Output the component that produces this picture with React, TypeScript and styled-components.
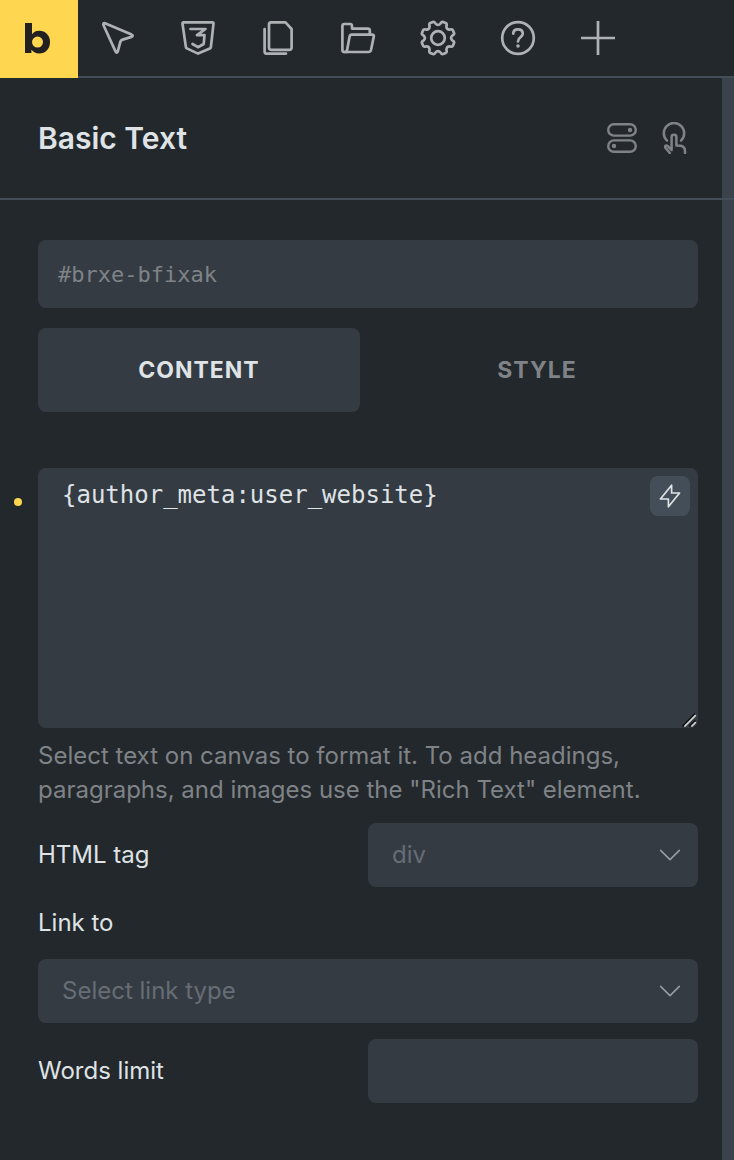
import React from "react";
import styled, { createGlobalStyle, css } from "styled-components";

const c = {
  bg: "#23282c",
  field: "#343b43",
  raised: "#434e59",
  line: "#434e58",
  text: "#dfe3e6",
  muted: "#7f8387",
  faint: "#666d75",
  icon: "#aeb2b5",
  accent: "#ffd64f",
};

const sans = `Inter, "Liberation Sans", sans-serif`;
const mono = `"DejaVu Sans Mono", "Liberation Mono", monospace`;

const GlobalStyle = createGlobalStyle`
  *, *::before, *::after { box-sizing: border-box; }
  body {
    margin: 0;
    background: ${c.bg};
    color: ${c.text};
    font-family: ${sans};
    font-size: 24px;
    line-height: 34px;
  }
  button, input, select, textarea {
    margin: 0;
    border: 0;
    font: inherit;
    letter-spacing: inherit;
    color: inherit;
  }
`;

const Builder = styled.div`
  display: flex;
  flex-direction: column;
  min-height: 100vh;
`;

const Toolbar = styled.nav`
  display: flex;
  height: 78px;
  border-bottom: 2px solid ${c.line};
`;

const Logo = styled.a`
  display: grid;
  place-items: center;
  width: 78px;
  height: 78px;
  background: ${c.accent};
  color: #212121;
`;

const ToolButton = styled.button`
  display: grid;
  place-items: center;
  width: 80px;
  height: 76px;
  padding: 0;
  background: none;
  color: ${c.icon};
  cursor: pointer;
`;

const Icon = styled.svg<{ $weight?: number }>`
  display: block;
  fill: none;
  stroke: currentColor;
  stroke-width: ${(p) => p.$weight ?? 2.7};
  stroke-linecap: round;
  stroke-linejoin: round;
`;

const Body = styled.div`
  flex: 1;
  display: flex;
`;

const Panel = styled.main`
  flex: 1;
  min-width: 0;
`;

const ResizeBar = styled.div`
  width: 12px;
  background: #3a434c;
  cursor: col-resize;
`;

/* The rule under the header runs on across the resize bar. */
const PanelHeader = styled.header`
  position: relative;
  display: flex;
  align-items: center;
  justify-content: space-between;
  height: 122px;
  margin-right: -12px;
  padding: 0 42px 0 38px;
  border-bottom: 2px solid ${c.line};
`;

const Title = styled.h1`
  margin: 0;
  font-size: 30px;
  font-weight: 600;
  line-height: 40px;
`;

const HeaderActions = styled.div`
  display: flex;
  gap: 16px;
`;

const HeaderButton = styled.button`
  display: grid;
  place-items: center;
  width: 36px;
  height: 36px;
  padding: 0;
  background: none;
  color: ${c.muted};
  cursor: pointer;
`;

const Content = styled.div`
  padding: 40px 24px 40px 38px;
`;

const fieldBase = css`
  display: block;
  width: 100%;
  border-radius: 8px;
  background: ${c.field};
  outline: none;
`;

const IdInput = styled.input`
  ${fieldBase}
  height: 68px;
  padding: 0 20px;
  && {
    font-family: ${mono};
    font-size: 22px;
    color: ${c.muted};
  }
`;

const Tabs = styled.div`
  display: grid;
  grid-template-columns: 1fr 1fr;
  gap: 16px;
  margin: 20px 0 56px;
`;

const Tab = styled.button<{ $active?: boolean }>`
  height: 84px;
  border-radius: 8px;
  background: ${(p) => (p.$active ? c.field : "transparent")};
  cursor: pointer;
  && {
    font-size: 23px;
    font-weight: 700;
    letter-spacing: 1px;
    color: ${(p) => (p.$active ? c.text : c.muted)};
  }
`;

const Controls = styled.form`
  display: flex;
  flex-direction: column;
  gap: 16px;
`;

const TextControl = styled.div`
  position: relative;
`;

const ChangedDot = styled.span`
  position: absolute;
  top: 30px;
  left: -24px;
  width: 8px;
  height: 8px;
  border-radius: 50%;
  background: ${c.accent};
`;

const TextArea = styled.textarea`
  ${fieldBase}
  height: 260px;
  padding: 10px 60px 10px 24px;
  resize: none;
  && { font-family: ${mono}; }
`;

const DynamicButton = styled.button`
  position: absolute;
  top: 8px;
  right: 8px;
  display: grid;
  place-items: center;
  width: 40px;
  height: 40px;
  padding: 0;
  border-radius: 8px;
  background: ${c.raised};
  cursor: pointer;
`;

const Grip = styled.svg`
  position: absolute;
  right: 1px;
  bottom: 1px;
  width: 16px;
  height: 14px;
  pointer-events: none;
`;

const Help = styled.p`
  margin: 11px 0 0;
  color: ${c.muted};
`;

const Row = styled.div`
  display: grid;
  grid-template-columns: 1fr 1fr;
  align-items: center;
`;

const Stack = styled.div`
  display: grid;
  gap: 16px;
`;

const Label = styled.label`
  line-height: 40px;
`;

const SelectBox = styled.div`
  position: relative;
`;

const Select = styled.select`
  ${fieldBase}
  height: 64px;
  padding: 0 56px 0 24px;
  appearance: none;
  cursor: pointer;
  && { color: ${c.faint}; }
`;

const Chevron = styled(Icon)`
  position: absolute;
  top: 26px;
  right: 17px;
  color: #9a9fa4;
  pointer-events: none;
`;

const NumberInput = styled.input`
  ${fieldBase}
  height: 64px;
  padding: 0 24px;
`;

/* Eight-toothed gear outline around (18, 18). */
const gearPath = (() => {
  const at = (deg: number, r: number) => {
    const a = (deg * Math.PI) / 180;
    return `${(18 + r * Math.cos(a)).toFixed(2)} ${(18 + r * Math.sin(a)).toFixed(2)}`;
  };
  let d = "";
  for (let i = 0; i < 8; i++) {
    const t = 22.5 + i * 45;
    d += `${i ? "L" : "M"}${at(t - 12, 15)}Q${at(t - 10, 17)} ${at(t - 5, 16.8)}L${at(t + 5, 16.8)}Q${at(t + 10, 17)} ${at(t + 12, 15)}Q${at(t + 22.5, 11.4)} ${at(t + 33, 15)}`;
  }
  return d + "Z";
})();

const tools: { name: string; art: React.ReactNode }[] = [
  {
    name: "Select element",
    art: <path d="M5 3.3 31.6 14.6q2.2 1.2 0 2.3L22.6 19.6q-1.6.5-2.2 2L17.8 31.4q-1.1 2.4-2.3 0L3.4 5Q2.9 2.6 5 3.3Z" />,
  },
  {
    name: "Stylesheets",
    art: (
      <>
        <path d="M3.6 2.4h28.8q1.3 0 1.1 1.3L30.9 27q-.1 1-1 1.4L18 33.6 6.9 28.4q-.9-.4-1-1.4L2.5 3.7q-.2-1.3 1.1-1.3Z" />
        <path d="M10.5 9H25.5L17 15.2H24.5L23.7 24 18 27.2 12.5 24" />
      </>
    ),
  },
  {
    name: "Templates",
    art: (
      <>
        <path d="M11 2.4H25.5L31.6 9V27.6q0 2.2-2.2 2.2H11.2q-2.2 0-2.2-2.2V4.6Q9 2.4 11 2.4Z" />
        <path d="M4.6 9V31.4q0 2.2 2.2 2.2H26" />
      </>
    ),
  },
  {
    name: "Pages",
    art: (
      <>
        <path d="M6.8 32H4.4q-2 0-2-2V6q0-2 2-2H10q2 0 2 2v2.6H27.8q2 0 2 2v4" />
        <path d="M11.6 14.6H32.2q2 0 1.6 2L31 30q-.5 2-2.5 2H4.8q2 0 2.3-2L9.6 16.6q.4-2 2-2Z" />
      </>
    ),
  },
  {
    name: "Settings",
    art: (
      <>
        <path d={gearPath} />
        <circle cx="18" cy="18" r="6.8" />
      </>
    ),
  },
  {
    name: "Help",
    art: (
      <>
        <circle cx="18" cy="18" r="15.8" />
        <path d="M13.2 13.6Q13.4 9.4 18 9.4T22.8 13.6Q22.8 15.6 20.6 17.2 18 19 18 21.4" />
        <circle cx="18" cy="26" r="1.1" fill="currentColor" strokeWidth="1.4" />
      </>
    ),
  },
  { name: "Add element", art: <path strokeLinecap="butt" d="M18 1v34M1 18h34" /> },
];

const ChevronDown = () => (
  <Chevron $weight={1.5} width="22" height="12" viewBox="0 0 22 12" aria-hidden="true">
    <path d="M1.6 1.4 11 10.6 20.4 1.4" />
  </Chevron>
);

export default function App() {
  return (
    <>
      <GlobalStyle />
      <Builder>
        <Toolbar aria-label="Builder">
          <Logo href="#" aria-label="Home">
            <svg width="28" height="32" viewBox="0 1 28 32" aria-hidden="true">
              <path
                fill="currentColor"
                fillRule="evenodd"
                d="M0 1 7 0V12.2Q9.6 8.8 14 8.8 19 8.8 22 12 25 15.2 25 20 25 25 22 28.2 19 31.4 14.2 31.4 9.2 31.4 6.4 27.8V31H0ZM12.6 14.6Q10.2 14.6 8.6 16.2 7 17.8 7 20.1T8.6 24 12.6 25.6 16.5 24 18 20.1 16.5 16.2 12.6 14.6Z"
              />
            </svg>
          </Logo>
          {tools.map((t) => (
            <ToolButton key={t.name} type="button" aria-label={t.name}>
              <Icon width="36" height="36" viewBox="0 0 36 36" aria-hidden="true">
                {t.art}
              </Icon>
            </ToolButton>
          ))}
        </Toolbar>

        <Body>
          <Panel>
            <PanelHeader>
              <Title>Basic Text</Title>
              <HeaderActions>
                <HeaderButton type="button" aria-label="Conditions">
                  <Icon $weight={2.4} width="32" height="32" viewBox="0 0 32 32" aria-hidden="true">
                    <rect x="2.2" y="2.2" width="27.6" height="11.4" rx="5.7" />
                    <rect x="2.2" y="18.4" width="27.6" height="11.4" rx="5.7" />
                    <circle cx="24" cy="8" r="1" />
                    <circle cx="8" cy="24" r="1" />
                  </Icon>
                </HeaderButton>
                <HeaderButton type="button" aria-label="Interactions">
                  <Icon $weight={2.5} width="32" height="32" viewBox="0 0 32 32" aria-hidden="true">
                    <path d="M9 18.6A10.2 10.2 0 1 1 23 18.6" />
                    <path d="M11.8 31 7.4 25.8Q6.6 22.9 9.2 23.6L13.6 28V15q0-2.2 2.4-2.2T18.4 15V23.4L22.6 23.8q4.4.9 4.4 5.2V31" />
                  </Icon>
                </HeaderButton>
              </HeaderActions>
            </PanelHeader>

            <Content>
              <IdInput aria-label="Element ID" defaultValue="#brxe-bfixak" spellCheck={false} />

              <Tabs role="tablist">
                <Tab type="button" role="tab" aria-selected="true" $active>
                  CONTENT
                </Tab>
                <Tab type="button" role="tab" aria-selected="false">
                  STYLE
                </Tab>
              </Tabs>

              <Controls>
                <div>
                  <TextControl>
                    <ChangedDot />
                    <TextArea
                      aria-label="Text"
                      aria-describedby="text-help"
                      defaultValue="{author_meta:user_website}"
                      spellCheck={false}
                    />
                    <DynamicButton type="button" aria-label="Select dynamic data">
                      <Icon $weight={1.7} width="24" height="24" viewBox="0 0 24 24" aria-hidden="true">
                        <path d="M13.6 1.2V9H21.6L10.4 22.8V15H2.4Z" />
                      </Icon>
                    </DynamicButton>
                    <Grip viewBox="0 0 16 14" aria-hidden="true">
                      <path d="M1.6 13.4 14 1M8.4 13.4 14.6 7.4" stroke="#111" strokeWidth="2" />
                      <path d="M3.4 13.6 14.8 2.2M10.4 13.6 14.8 9.2" stroke="#d0d3d6" strokeWidth="1.7" />
                    </Grip>
                  </TextControl>
                  <Help id="text-help">
                    Select text on canvas to format it. To add headings, paragraphs, and images use the "Rich Text"
                    element.
                  </Help>
                </div>

                <Row>
                  <Label htmlFor="tag">HTML tag</Label>
                  <SelectBox>
                    <Select id="tag">
                      <option>div</option>
                    </Select>
                    <ChevronDown />
                  </SelectBox>
                </Row>

                <Stack>
                  <Label htmlFor="link">Link to</Label>
                  <SelectBox>
                    <Select id="link">
                      <option>Select link type</option>
                    </Select>
                    <ChevronDown />
                  </SelectBox>
                </Stack>

                <Row>
                  <Label htmlFor="limit">Words limit</Label>
                  <NumberInput id="limit" inputMode="numeric" />
                </Row>
              </Controls>
            </Content>
          </Panel>
          <ResizeBar />
        </Body>
      </Builder>
    </>
  );
}
